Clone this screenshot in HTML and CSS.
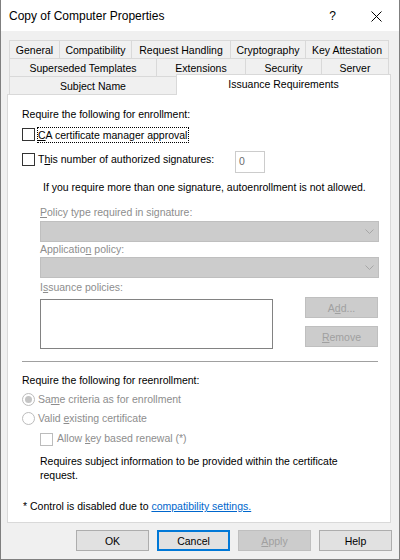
FILE: index.html
```html
<!DOCTYPE html>
<html>
<head>
<meta charset="utf-8">
<title>Copy of Computer Properties</title>
<link rel="stylesheet" href="styles.css">
</head>
<body>
<div class="window">
  <div class="titlebar">
    <span class="title">Copy of Computer Properties</span>
    <span class="cap-help">?</span>
    <span class="cap-close"><svg width="11" height="11" viewBox="0 0 11 11"><path d="M0.5 0.5L10.5 10.5M10.5 0.5L0.5 10.5" stroke="#000" stroke-width="1" fill="none"/></svg></span>
  </div>
  <div class="client">
    <div class="tabs">
      <div class="tabrow r1">
        <div class="tab">General</div>
        <div class="tab">Compatibility</div>
        <div class="tab">Request Handling</div>
        <div class="tab">Cryptography</div>
        <div class="tab last">Key Attestation</div>
      </div>
      <div class="tabrow r2">
        <div class="tab">Superseded Templates</div>
        <div class="tab">Extensions</div>
        <div class="tab">Security</div>
        <div class="tab last">Server</div>
      </div>
      <div class="tabrow r3">
        <div class="tab">Subject Name</div>
        <div class="tab selected">Issuance Requirements</div>
      </div>
    </div>
    <div class="panel">
      <div class="heading">Require the following for enrollment:</div>
      <div class="cb-row cb1">
        <span class="box box-1"></span>
        <span class="focus-label"><u>C</u>A certificate manager approval</span>
      </div>
      <div class="cb-row cb2">
        <div class="cb2-left">
          <span class="box box-2"></span>
          <span class="label-2">T<u>h</u>is number of authorized signatures:</span>
        </div>
        <div class="numbox">0</div>
      </div>
      <div class="note">If you require more than one signature, autoenrollment is not allowed.</div>
      <div class="dlabel lbl-policy"><u>P</u>olicy type required in signature:</div>
      <div class="combo"><svg width="9" height="5" viewBox="0 0 9 5"><path d="M0.5 0.5L4.5 4.5L8.5 0.5" stroke="#a6a6a6" fill="none"/></svg></div>
      <div class="dlabel">Applicatio<u>n</u> policy:</div>
      <div class="combo"><svg width="9" height="5" viewBox="0 0 9 5"><path d="M0.5 0.5L4.5 4.5L8.5 0.5" stroke="#a6a6a6" fill="none"/></svg></div>
      <div class="dlabel lbl-iss">I<u>s</u>suance policies:</div>
      <div class="list-row">
        <div class="listbox"></div>
        <div class="side-btns">
          <div class="btn disabled">A<u>d</u>d...</div>
          <div class="btn disabled"><u>R</u>emove</div>
        </div>
      </div>
      <div class="sep"></div>
      <div class="heading head2">Require the following for reenrollment:</div>
      <div class="cb-row radio-row">
        <span class="radio checked"></span>
        <span class="radio-label grey">Sa<u>m</u>e criteria as for enrollment</span>
      </div>
      <div class="cb-row radio-row">
        <span class="radio"></span>
        <span class="radio-label grey">Valid <u>e</u>xisting certificate</span>
      </div>
      <div class="cb-row cb3">
        <span class="box box-dis"></span>
        <span class="label-3 grey">Allow <u>k</u>ey based renewal (*)</span>
      </div>
      <div class="req-text">Requires subject information to be provided within the certificate request.</div>
      <div class="foot">* Control is disabled due to <span class="link">compatibility settings.</span></div>
    </div>
    <div class="buttons">
      <div class="btn">OK</div>
      <div class="btn default">Cancel</div>
      <div class="btn disabled"><u>A</u>pply</div>
      <div class="btn">Help</div>
    </div>
  </div>
</div>
</body>
</html>
```
FILE: styles.css
```css
html, body {
  margin: 0;
  padding: 0;
}
body {
  font-family: "Liberation Sans", Arial, sans-serif;
  font-size: 10.5px;
  color: #000;
  background: #f0f0f0;
}
.window {
  width: 400px;
  height: 560px;
  box-sizing: border-box;
  border: 1px solid #7f7f7f;
  border-top: none;
  display: flex;
  flex-direction: column;
  background: #f0f0f0;
}
.titlebar {
  height: 31px;
  background: #fff;
  display: flex;
  align-items: center;
  flex: none;
  font-size: 12px;
}
.title {
  flex: 1;
  padding-left: 8px;
  line-height: 15px;
  padding-top: 1px;
}
.cap-help {
  width: 46px;
  text-align: center;
  line-height: 15px;
  padding-left: 3px;
  box-sizing: border-box;
  padding-top: 1px;
}
.cap-close {
  width: 45px;
  display: flex;
  justify-content: center;
  align-items: center;
  padding-top: 1px;
}
.cap-close svg {
  display: block;
}
.client {
  flex: 1;
  display: flex;
  flex-direction: column;
}
.tabs {
  margin-top: 9px;
  margin-left: 8px;
  width: 380px;
}
.tabrow {
  display: grid;
  height: 18px;
}
.r1 { grid-template-columns: 50px 72px 99px 75px 84px; }
.r2 { grid-template-columns: 147px 89px 76px 68px; }
.r3 { grid-template-columns: 167px 213px; }
.tab {
  box-sizing: border-box;
  border: 1px solid #d9d9d9;
  border-right: none;
  border-bottom: none;
  line-height: 17px;
  padding-top: 1px;
  text-align: center;
  white-space: nowrap;
  background: #f0f0f0;
}
.tab.last {
  border-right: 1px solid #d9d9d9;
}
.tab.selected {
  position: relative;
  z-index: 1;
  background: #fff;
  border-right: 1px solid #d9d9d9;
  margin-top: -2px;
  margin-right: -2px;
  height: 21px;
}
.panel {
  margin-left: 6px;
  width: 384px;
  height: 429px;
  box-sizing: border-box;
  border: 1px solid #d9d9d9;
  background: #fff;
  padding-left: 14px;
  flex: none;
}
.heading {
  margin-top: 12px;
  line-height: 15px;
}
.cb-row {
  display: flex;
  align-items: flex-start;
}
.box {
  width: 13px;
  height: 13px;
  box-sizing: border-box;
  border: 1px solid #333;
  background: #fff;
  flex: none;
}
.cb1 {
  margin-top: 5px;
  height: 16px;
}
.box-1 { margin-top: 1px; }
.focus-label {
  margin-left: 2px;
  border: 1px dotted #000;
  line-height: 14px;
  padding-right: 1px;
}
.cb2 {
  margin-top: 8px;
  height: 22px;
}
.cb2-left {
  width: 213px;
  display: flex;
  align-items: flex-start;
}
.box-2 { margin-top: 2px; }
.label-2 {
  margin-left: 3px;
  line-height: 15px;
  padding-top: 1px;
  white-space: nowrap;
}
.numbox {
  width: 30px;
  height: 22px;
  box-sizing: border-box;
  border: 1px solid #cccccc;
  padding-left: 3px;
  line-height: 19px;
  color: #6d6d6d;
}
.note {
  margin-top: 7px;
  margin-left: 21px;
  line-height: 15px;
  white-space: nowrap;
}
.dlabel {
  margin-left: 18px;
  line-height: 15px;
  color: #8d8d8d;
}
.lbl-policy { margin-top: 10px; }
.lbl-iss { margin-top: 2px; }
.combo {
  margin-left: 18px;
  width: 339px;
  height: 21px;
  box-sizing: border-box;
  border: 1px solid #bfbfbf;
  background: #cccccc;
  display: flex;
  justify-content: flex-end;
  align-items: center;
  padding-right: 4px;
}
.lbl-policy + .combo { margin-top: 1px; }
.combo svg {
  display: block;
  margin-top: -1px;
}
.list-row {
  display: flex;
  margin-top: 2px;
  margin-left: 18px;
  align-items: flex-start;
}
.listbox {
  width: 233px;
  height: 50px;
  margin-top: 2px;
  box-sizing: border-box;
  border: 1px solid #828282;
  background: #fff;
}
.side-btns {
  margin-left: 32px;
  display: flex;
  flex-direction: column;
  gap: 8px;
}
.btn {
  width: 73px;
  height: 21px;
  box-sizing: border-box;
  border: 1px solid #adadad;
  background: #e1e1e1;
  text-align: center;
  line-height: 19px;
  padding-top: 1px;
}
.btn.disabled {
  background: #cccccc;
  border-color: #bfbfbf;
  color: #a0a0a0;
}
.btn.default {
  border: 2px solid #0078d7;
  line-height: 17px;
}
.sep {
  margin-top: 12px;
  width: 356px;
  height: 1px;
  background: #a0a0a0;
}
.head2 {
  margin-top: 11px;
}
.radio-row {
  height: 15px;
  margin-top: 4px;
}
.radio {
  width: 13px;
  height: 13px;
  margin-top: 1px;
  box-sizing: border-box;
  border: 1px solid #bcbcbc;
  border-radius: 50%;
  background: #fff;
  flex: none;
  display: flex;
  align-items: center;
  justify-content: center;
}
.radio.checked::after {
  content: "";
  width: 7px;
  height: 7px;
  border-radius: 50%;
  background: #c4c4c4;
}
.radio-label {
  margin-left: 3px;
  line-height: 15px;
}
.grey {
  color: #8d8d8d;
}
.cb3 {
  margin-top: 5px;
  margin-left: 18px;
  height: 15px;
}
.box-dis {
  margin-top: 2px;
  border-color: #bcbcbc;
}
.label-3 {
  margin-left: 4px;
  line-height: 15px;
}
.req-text {
  margin-top: 8px;
  margin-left: 18px;
  width: 320px;
  line-height: 14px;
}
.foot {
  margin-top: 17px;
  margin-left: 1px;
  line-height: 15px;
}
.link {
  color: #0066cc;
  text-decoration: underline;
}
.buttons {
  margin-top: 7px;
  display: flex;
  justify-content: flex-end;
  gap: 8px;
  padding-right: 7px;
}
```
